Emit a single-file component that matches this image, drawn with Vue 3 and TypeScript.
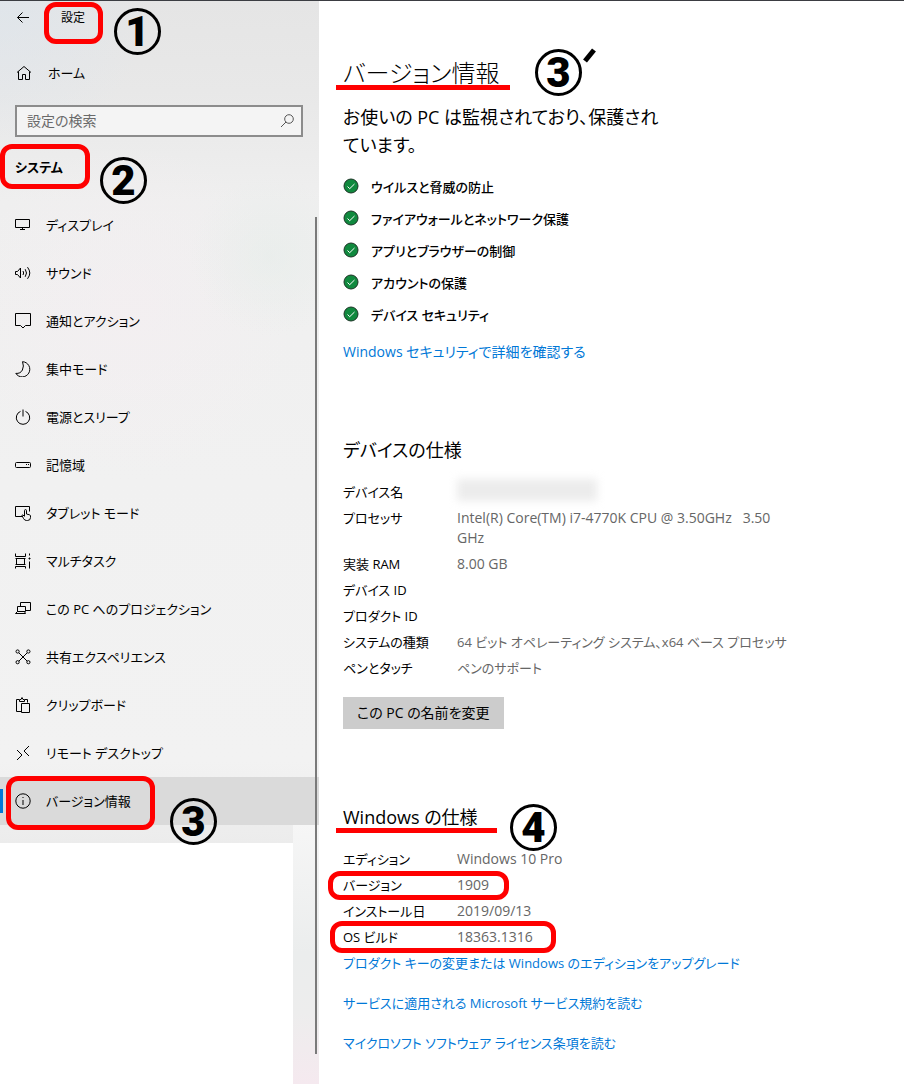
<script setup lang="ts">
interface NavItem {
  label: string
  icon: string[]
  current?: boolean
}

interface SpecRow {
  label: string
  value: string
  mark?: 'version' | 'build'
  hidden?: boolean
  compact?: boolean
}

const navItems: NavItem[] = [
  { label: 'ディスプレイ', icon: ['M.5 2.5h14v8H.5z', 'M7.5 10.5v2M5 12.5h5'] },
  {
    label: 'サウンド',
    icon: ['M.5 6.5h2l3-3.5v10l-3-3.5h-2z', 'M8 6q1.3 2 0 4M10.2 4.2q2.6 3.8 0 7.6M12.5 2.2q4.6 5.8 0 11.6'],
  },
  { label: '通知とアクション', icon: ['M.5.5h15v12h-5L8 15l-2.500-2.500h-5z'] },
  { label: '集中モード', icon: ['M7.500.7A7.600 7.600 0 1 1 .8 12.400Q5.500 12.800 7.400 9T7.500.7z'] },
  { label: '電源とスリープ', icon: ['M5.500 2.400a6.700 6.700 0 1 0 5 0', 'M8 .5v7'] },
  { label: '記憶域', icon: ['M1.500 5.500h13q1 0 1 1v3q0 1-1 1h-13q-1 0-1-1v-3q0-1 1-1z', 'M11 7.500h1M13 7.500h1'] },
  {
    label: 'タブレット モード',
    icon: ['M7 11.500H.5v-10h14v5', 'M9.500 11V5.600q0-1 1-1t1 1V9l3 .8q1 .3 1 1.200v1.500q0 3-3 3h-1q-2 0-3-2L7 10.600q0-1 1-.6l1.500 1.500'],
  },
  {
    label: 'マルチタスク',
    icon: ['M.5.5v3h10v-3M1.500 5.500v6M9.500 5.500v6M.5 5.500h10M.5 11.500h10M.5 15.500v-2h10v2', 'M14.500.5v2M13.500 5.500h2M14.500 4.500v2M14.500 8.500v7'],
  },
  { label: 'この PC へのプロジェクション', icon: ['M5.500 5.500v-4h10v8h-5', 'M2.500 5.500h8v5h-8zM.5 12.500h10l-1-2h-7z'] },
  {
    label: '共有エクスペリエンス',
    icon: [
      'M4 4l8 8M12 4l-8 8',
      'M1 2.500a1.600 1.600 0 1 0 3.200 0a1.600 1.600 0 1 0-3.200 0M11.800 2.500a1.600 1.600 0 1 0 3.200 0a1.600 1.600 0 1 0-3.200 0M1 13.200a1.600 1.600 0 1 0 3.200 0a1.600 1.600 0 1 0-3.200 0M11.800 13.200a1.600 1.600 0 1 0 3.200 0a1.600 1.600 0 1 0-3.200 0',
    ],
  },
  { label: 'クリップボード', icon: ['M6 14.500H1.500v-12H4M10 2.500h2.500v3', 'M4.500 4.500v-2h1.500l1-2 1 2h1.500v2z', 'M6.500 6.500h8v9h-8z'] },
  { label: 'リモート デスクトップ', icon: ['M2 5l5 5-5 5', 'M14 1L9 6l5 5'] },
  {
    label: 'バージョン情報',
    icon: ['M.8 8a7.200 7.200 0 1 0 14.400 0a7.200 7.200 0 1 0-14.400 0', 'M8 7v5M8 4v1'],
    current: true,
  },
]

const protections: string[] = [
  'ウイルスと脅威の防止',
  'ファイアウォールとネットワーク保護',
  'アプリとブラウザーの制御',
  'アカウントの保護',
  'デバイス セキュリティ',
]

const deviceSpecs: SpecRow[] = [
  { label: 'デバイス名', value: '', hidden: true },
  { label: 'プロセッサ', value: 'Intel(R) Core(TM) i7-4770K CPU @ 3.50GHz   3.50\nGHz' },
  { label: '実装 RAM', value: '8.00 GB' },
  { label: 'デバイス ID', value: '' },
  { label: 'プロダクト ID', value: '' },
  { label: 'システムの種類', value: '64 ビット オペレーティング システム、x64 ベース プロセッサ', compact: true },
  { label: 'ペンとタッチ', value: 'ペンのサポート', compact: true },
]

const windowsSpecs: SpecRow[] = [
  { label: 'エディション', value: 'Windows 10 Pro' },
  { label: 'バージョン', value: '1909', mark: 'version' },
  { label: 'インストール日', value: '2019/09/13' },
  { label: 'OS ビルド', value: '18363.1316', mark: 'build' },
]

const links: string[] = [
  'プロダクト キーの変更または Windows のエディションをアップグレード',
  'サービスに適用される Microsoft サービス規約を読む',
  'マイクロソフト ソフトウェア ライセンス条項を読む',
]
</script>

<template>
  <div class="window">
    <aside class="side">
      <div class="pane">
        <header class="titlebar">
          <button class="back" type="button" aria-label="戻る">
            <svg class="icon" viewBox="0 0 16 16"><path d="M14 7.500H2.500M7.500 2.500l-5 5 5 5" /></svg>
          </button>
          <span class="app-name">設定<i class="ring ring-title"></i><b class="step step-title">1</b></span>
        </header>

        <a class="home" href="#">
          <svg class="icon" viewBox="0 0 16 16"><path d="M1 7.500L8 1.500l7 6M2.500 6.500v8h4v-5h3v5h4v-8" /></svg>
          <span>ホーム</span>
        </a>

        <label class="search">
          <input type="search" placeholder="設定の検索" aria-label="設定の検索" />
          <svg class="icon" viewBox="0 0 16 16"><circle cx="10" cy="6" r="4.300" /><path d="M7 9l-5 5" /></svg>
        </label>

        <h2 class="category">
          システム<i class="ring ring-category"></i><b class="step step-category">2</b>
        </h2>

        <nav class="nav">
          <a
            v-for="item in navItems"
            :key="item.label"
            class="nav-item"
            :class="{ current: item.current }"
            :aria-current="item.current ? 'page' : undefined"
            href="#"
          >
            <svg class="icon" viewBox="0 0 16 16"><path v-for="d in item.icon" :key="d" :d="d" /></svg>
            <span>{{ item.label }}</span>
            <template v-if="item.current">
              <i class="ring ring-nav"></i><b class="step step-nav">3</b>
            </template>
          </a>
        </nav>
      </div>
      <div class="strip"></div>
      <div class="scrollbar"></div>
    </aside>

    <main class="content">
      <h1 class="title">
        バージョン情報<i class="underline"></i><b class="step step-heading">3</b>
        <svg class="prime" viewBox="0 0 14 16"><path d="M12 2L3 13" /></svg>
      </h1>

      <p class="lead">お使いの PC は監視されており、保護され<br />ています。</p>

      <ul class="checks">
        <li v-for="name in protections" :key="name">
          <svg class="check" viewBox="0 0 16 16">
            <circle cx="8" cy="7" r="7" />
            <path d="M4.500 7.500l2.200 2.200L11.500 5" />
          </svg>
          <span>{{ name }}</span>
        </li>
      </ul>
      <a class="link" href="#">Windows セキュリティで詳細を確認する</a>

      <section class="section">
        <h2>デバイスの仕様</h2>
        <table>
          <tbody>
            <tr v-for="row in deviceSpecs" :key="row.label">
              <th scope="row">{{ row.label }}</th>
              <td :class="{ compact: row.compact }"><span v-if="row.hidden" class="redacted"></span>{{ row.value }}</td>
            </tr>
          </tbody>
        </table>
        <button class="rename" type="button">この PC の名前を変更</button>
      </section>

      <section class="section">
        <h2>Windows の仕様<i class="underline"></i><b class="step step-windows">4</b></h2>
        <table>
          <tbody>
            <tr v-for="row in windowsSpecs" :key="row.label">
              <th scope="row">{{ row.label }}<i v-if="row.mark" class="ring" :class="'ring-' + row.mark"></i></th>
              <td>{{ row.value }}</td>
            </tr>
          </tbody>
        </table>
        <div class="links">
          <a v-for="text in links" :key="text" class="link" href="#">{{ text }}</a>
        </div>
      </section>
    </main>
  </div>
</template>

<style>
body {
  margin: 0;
  background: #fff;
}
</style>

<style scoped>
.window {
  display: flex;
  box-sizing: border-box;
  min-height: 100vh;
  border-top: 1px solid #3b3d42;
  font-family: "Open Sans", "Noto Sans CJK JP", sans-serif;
  font-feature-settings: "palt";
  font-size: 14px;
  line-height: 20px;
  color: #000;
}

h1,
h2,
p,
ul {
  margin: 0;
  padding: 0;
}

a {
  color: inherit;
  text-decoration: none;
}

button,
input {
  font: inherit;
  font-feature-settings: inherit;
  color: inherit;
}

.icon {
  flex: none;
  width: 16px;
  height: 16px;
  fill: none;
  stroke: #000;
  stroke-width: 1;
}

/* Side pane */
.side {
  position: relative;
  display: flex;
  flex: none;
  flex-direction: column;
  width: 319px;
}

.pane {
  padding-bottom: 18px;
  background:
    radial-gradient(circle at 270px 255px, rgba(228, 236, 232, 0.5), transparent 80px),
    radial-gradient(circle at 130px 310px, rgba(246, 238, 242, 0.5), transparent 170px),
    radial-gradient(circle at 0 0, rgba(220, 229, 238, 0.6), transparent 150px),
    linear-gradient(#e5e5e5, #e8e8e8 90px, #efefef 200px, #f1f1f1 480px, #f2f2f2 760px, #ececec);
}

.titlebar {
  display: flex;
  align-items: center;
  height: 34px;
  padding-left: 15px;
}

.back {
  display: flex;
  padding: 0;
  border: 0;
  background: none;
}

.app-name {
  position: relative;
  margin-left: 30px;
  font-size: 12px;
}

.home {
  display: flex;
  align-items: center;
  gap: 16px;
  height: 48px;
  margin-top: 14px;
  padding-left: 16px;
  font-size: 13px;
}

.search {
  display: flex;
  align-items: center;
  box-sizing: border-box;
  height: 32px;
  margin: 8px 16px 0 15px;
  padding: 0 6px 0 10px;
  border: 2px solid #8c8c8c;
  background: #f4f4f4;
}

.search input {
  flex: 1;
  min-width: 0;
  padding: 0;
  border: 0;
  outline: 0;
  background: none;
}

.search input::placeholder {
  color: #6a6a6a;
  opacity: 1;
}

.search .icon {
  stroke: #555;
}

.category {
  position: relative;
  margin: 20px 0 24px;
  padding-left: 15px;
  font-size: 13px;
  font-weight: 600;
}

.nav-item {
  position: relative;
  display: flex;
  align-items: center;
  gap: 15px;
  height: 48px;
  padding-left: 15px;
  font-size: 13px;
}

.current {
  background: #dadada;
}

.current::before {
  position: absolute;
  top: 12px;
  left: 0;
  width: 3px;
  height: 24px;
  background: #0078d7;
  content: "";
}

.strip {
  flex: 1;
  width: 26px;
  margin-top: -20px;
  margin-left: auto;
  background: linear-gradient(#f6f6f6, #ebeded 130px, #ededed 190px, #f5e9ef);
}

.scrollbar {
  position: absolute;
  top: 216px;
  right: 2px;
  bottom: 30px;
  width: 2px;
  background: #7a7a7a;
}

/* Main column */
.content {
  flex: 1;
  min-width: 0;
  padding: 52px 24px 24px;
}

.title {
  position: relative;
  width: fit-content;
  font-size: 24px;
  font-weight: 300;
  line-height: 40px;
}

.lead {
  margin-top: 10px;
  font-size: 18px;
  line-height: 28px;
}

.checks {
  margin-top: 12px;
  list-style: none;
  font-size: 13px;
  font-weight: 500;
}

.checks li {
  display: flex;
  align-items: center;
  gap: 12px;
  height: 32px;
}

.check {
  flex: none;
  width: 16px;
  height: 16px;
  overflow: visible;
  fill: #10893e;
  stroke: #1c3325;
}

.check path {
  fill: none;
  stroke: #fff;
}

.link {
  display: block;
  width: fit-content;
  color: #0078d7;
}

.checks + .link {
  margin-top: 11px;
}

.section {
  margin-top: 74px;
}

.section h2 {
  position: relative;
  width: fit-content;
  font-size: 18px;
  font-weight: 400;
  line-height: 28px;
}

.section table {
  margin-top: 15px;
  border-spacing: 0;
}

.section th,
.section td {
  position: relative;
  padding: 3px 0;
  text-align: left;
  vertical-align: top;
  font-weight: 400;
}

.section th {
  width: 114px;
  font-size: 13px;
}

.section td {
  color: #666;
  white-space: pre-wrap;
}

.section .compact {
  font-size: 13px;
}

.redacted {
  position: absolute;
  top: 0;
  left: 0;
  width: 140px;
  height: 22px;
  background: #ececec;
  filter: blur(4px);
}

.rename {
  height: 32px;
  margin-top: 16px;
  padding: 0 14px;
  border: 0;
  background: #ccc;
}

.links {
  display: grid;
  gap: 20px;
  margin-top: 3px;
  font-size: 13px;
}

/* Guide marks laid over the settings */
.ring {
  position: absolute;
  z-index: 1;
  box-sizing: border-box;
  border: 5px solid #f00;
  border-radius: 12px;
}

.ring-title {
  top: -6px;
  left: -17px;
  width: 59px;
  height: 42px;
}

.ring-category {
  top: -13px;
  left: 0;
  width: 90px;
  height: 45px;
}

.ring-nav {
  top: -1px;
  left: 6px;
  width: 149px;
  height: 54px;
}

.ring-version {
  top: -1px;
  left: -15px;
  width: 181px;
  height: 29px;
}

.ring-build {
  top: -3px;
  left: -13px;
  width: 226px;
  height: 32px;
}

.underline {
  position: absolute;
  bottom: 3px;
  left: -7px;
  width: 174px;
  height: 5px;
  background: #f00;
}

.section .underline {
  bottom: -2px;
  width: 161px;
}

.step {
  position: absolute;
  z-index: 1;
  box-sizing: border-box;
  width: 47px;
  height: 47px;
  border: 3px solid #000;
  border-radius: 50%;
  font-family: Roboto, "Liberation Sans", sans-serif;
  font-size: 42px;
  font-weight: 900;
  line-height: 42px;
  text-align: center;
}

.step-title {
  top: 0;
  left: 53px;
}

.step-category {
  top: 0;
  left: 100px;
}

.step-nav {
  top: 21px;
  left: 170px;
}

.step-heading {
  top: -4px;
  left: 192px;
}

.step-windows {
  top: 1px;
  left: 167px;
}

.prime {
  position: absolute;
  top: -5px;
  left: 239px;
  width: 14px;
  height: 16px;
  fill: none;
  stroke: #000;
  stroke-width: 5;
}
</style>
